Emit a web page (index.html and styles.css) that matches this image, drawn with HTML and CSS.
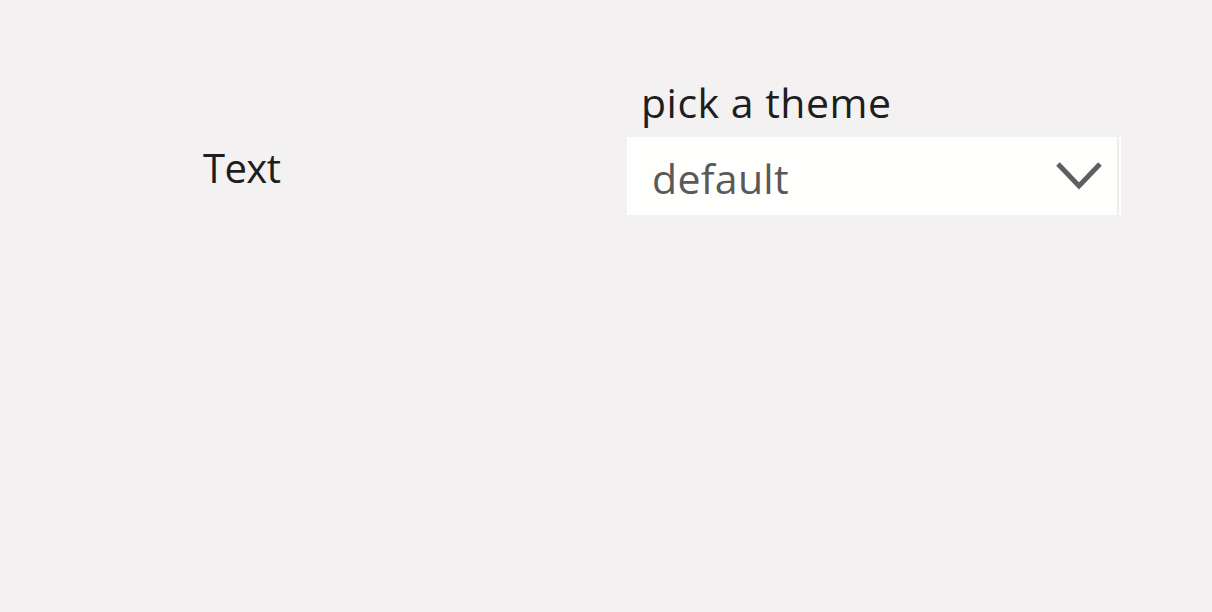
FILE: index.html
```html
<!DOCTYPE html>
<html>
<head>
<meta charset="utf-8">
<link rel="stylesheet" href="styles.css">
</head>
<body>
<div class="page">
  <div class="row">
    <div class="text-cell">Text</div>
    <div class="picker">
      <div class="picker-label">pick a theme</div>
      <div class="select">
        <span class="select-value">default</span>
        <svg class="chevron" width="46" height="28" viewBox="0 0 46 28">
          <path d="M2 2 L23 24 L44 2" fill="none" stroke="#5f5f5f" stroke-width="5"/>
        </svg>
      </div>
    </div>
  </div>
</div>
</body>
</html>
```
FILE: styles.css
```css
html, body {
  margin: 0;
  padding: 0;
  background: #f3f1f1;
  font-family: "Open Sans", "Noto Sans", sans-serif;
}
.page {
  padding: 75px 0 0 0;
}
.row {
  display: flex;
  align-items: flex-start;
}
.text-cell {
  margin-left: 203px;
  margin-top: 66px;
  width: 424px;
  font-size: 40px;
  letter-spacing: -0.6px;
  line-height: 54px;
  color: #1e1e1e;
}
.picker {
  display: flex;
  flex-direction: column;
}
.picker-label {
  padding-left: 14px;
  padding-bottom: 8px;
  font-size: 41px;
  letter-spacing: 0.5px;
  line-height: 54px;
  color: #1e1e1e;
}
.select {
  box-sizing: border-box;
  width: 494px;
  height: 78px;
  background: #fefefd;
  box-shadow: inset -2px 0 0 #fefefd, inset -4px 0 0 #eeeeee;
  display: flex;
  align-items: center;
  justify-content: space-between;
  padding: 4px 19px 0 25px;
}
.select-value {
  font-size: 41px;
  letter-spacing: 0.3px;
  color: #595959;
}
.chevron {
  display: block;
  margin-top: -4px;
}
```
